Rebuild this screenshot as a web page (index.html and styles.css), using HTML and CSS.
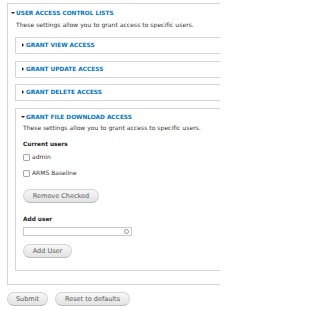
FILE: index.html
```html
<!DOCTYPE html>
<html>
<head>
<meta charset="utf-8">
<link rel="stylesheet" href="styles.css">
</head>
<body>
<div class="page">
  <div class="fs outer">
    <div class="legend"><span class="tri down"></span>User access control lists</div>
    <div class="desc">These settings allow you to grant access to specific users.</div>
    <div class="fs inner collapsed"><div class="legend"><span class="tri right"></span>Grant view access</div></div>
    <div class="fs inner collapsed"><div class="legend"><span class="tri right"></span>Grant update access</div></div>
    <div class="fs inner collapsed tight"><div class="legend"><span class="tri right"></span>Grant delete access</div></div>
    <div class="fs inner open">
      <div class="legend"><span class="tri down"></span>Grant file download access</div>
      <div class="body">
        <div class="desc">These settings allow you to grant access to specific users.</div>
        <div class="label">Current users</div>
        <label class="check"><span class="box"></span>admin</label>
        <label class="check"><span class="box"></span>ARMS Baseline</label>
        <button class="btn remove">Remove Checked</button>
        <div class="label add">Add user</div>
        <div class="input"><span class="throbber"></span></div>
        <button class="btn adduser">Add User</button>
      </div>
    </div>
  </div>
  <div class="actions">
    <button class="btn submit">Submit</button>
    <button class="btn reset">Reset to defaults</button>
  </div>
</div>
</body>
</html>
```

FILE: styles.css
```css
html, body {
  margin: 0;
  padding: 0;
  background: #fff;
}
body {
  font-family: "DejaVu Sans", Verdana, sans-serif;
  font-size: 6px;
  color: #333;
}
.page {
  width: 220px;
  box-sizing: border-box;
  padding: 3px 0 0 7px;
}
.fs {
  border: 1px solid #d6d6d6;
  border-right: none;
  display: flex;
  flex-direction: column;
  box-sizing: border-box;
}
.outer {
  width: 213px;
  padding: 5px 0 13px 7px;
}
.legend {
  display: flex;
  align-items: center;
  height: 8px;
  line-height: 8px;
  font-size: 5.8px;
  font-weight: bold;
  text-transform: uppercase;
  color: #0074bd;
  white-space: nowrap;
}
.outer > .legend {
  margin-left: -4px;
}
.tri {
  display: inline-block;
  flex: none;
  width: 0;
  height: 0;
}
.tri.down {
  border-left: 2px solid transparent;
  border-right: 2px solid transparent;
  border-top: 2px solid #222;
  margin-right: 1px;
}
.tri.right {
  border-top: 2px solid transparent;
  border-bottom: 2px solid transparent;
  border-left: 2px solid #222;
  margin-left: 3px;
  margin-right: 2px;
}
.open > .legend .tri.down {
  margin-left: 2px;
}
.desc {
  height: 8px;
  line-height: 8px;
  margin-top: 4px;
  color: #333;
  letter-spacing: 0.05px;
  white-space: nowrap;
}
.outer > .desc {
  margin-left: 1px;
}
.inner {
  padding: 3px 0 4px 3px;
  margin-top: 7px;
}
.outer > .desc + .inner {
  margin-top: 8px;
}
.inner.tight {
  margin-top: 6px;
}
.inner.open {
  padding: 4px 0 12px 3px;
}
.body {
  display: flex;
  flex-direction: column;
  align-items: flex-start;
  padding-left: 4px;
}
.open .body .desc {
  margin-top: 3px;
}
.label {
  height: 8px;
  line-height: 8px;
  font-size: 5.8px;
  font-weight: bold;
  color: #222;
  margin-top: 8px;
}
.label.add {
  margin-top: 12px;
}
.check {
  display: flex;
  align-items: center;
  height: 8px;
  line-height: 8px;
  margin-top: 5px;
  color: #333;
}
.check + .check {
  margin-top: 8px;
}
.box {
  width: 5px;
  height: 5px;
  border: 1px solid #aaa;
  border-radius: 1px;
  background: #fafafa;
  margin-right: 2px;
}
.btn {
  font-family: "DejaVu Sans", Verdana, sans-serif;
  font-size: 6.5px;
  color: #5a5a5a;
  background: linear-gradient(#f8f8f8, #e2e2e2);
  border: 1px solid #d4d4d4;
  border-bottom-color: #bdbdbd;
  border-radius: 8px;
  padding: 0;
  margin: 0;
  display: flex;
  align-items: center;
  justify-content: center;
  flex: none;
}
.remove {
  width: 76px;
  height: 14px;
  margin-top: 12px;
}
.input {
  position: relative;
  width: 109px;
  height: 9px;
  box-sizing: border-box;
  border: 1px solid #ccc;
  margin-top: 4px;
}
.throbber {
  position: absolute;
  right: 2px;
  top: 1px;
  width: 3px;
  height: 3px;
  border: 1px solid #999;
  border-radius: 50%;
}
.adduser {
  width: 49px;
  height: 14px;
  margin-top: 8px;
}
.actions {
  display: flex;
  gap: 7px;
  margin-top: 7px;
}
.submit {
  width: 41px;
  height: 14px;
}
.reset {
  width: 75px;
  height: 14px;
}
```
